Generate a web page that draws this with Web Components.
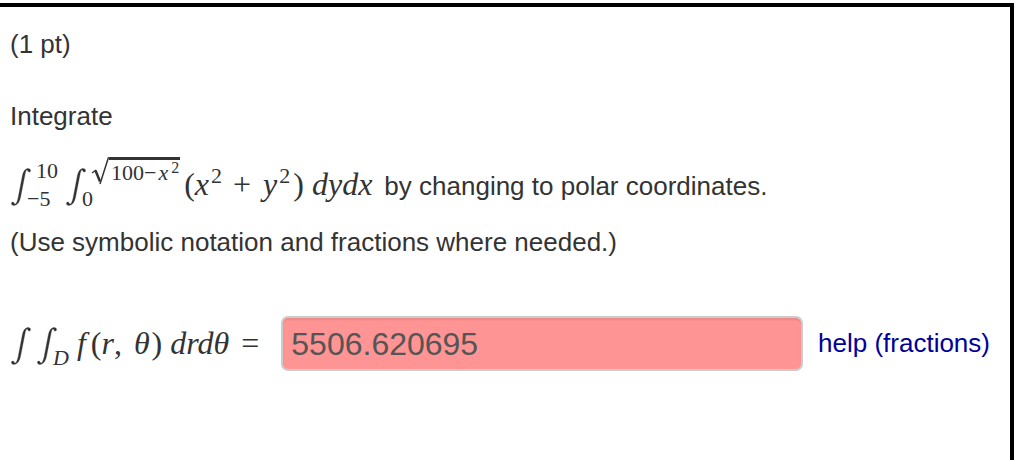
<!DOCTYPE html>
<html lang="en">
<head>
<meta charset="utf-8">
<title>Polar coordinates</title>
<style>
body { margin: 0; background: #fff; color: #333; font: 26px/36px "Liberation Sans", Arial, sans-serif; }
</style>
</head>
<body>
<problem-page></problem-page>
<script>
function define(name, html) {
  const t = document.createElement('template');
  t.innerHTML = html;
  customElements.define(name, class extends HTMLElement {
    constructor() {
      super();
      this.attachShadow({ mode: 'open' }).append(t.content.cloneNode(true));
    }
  });
}

define('math-text', `
<style>
:host { display: block; font: 32px/56px "Liberation Serif", "Times New Roman", serif; padding-bottom: 2px; white-space: nowrap; }
::slotted(sup) { font-size: 22px; line-height: 0; vertical-align: 12px; margin: 0 3px 0 2px; }
</style><slot></slot>`);

define('math-root', `
<style>
:host { display: flex; height: 28px; }
svg { width: 18px; height: 28px; fill: none; stroke: currentColor; }
span { border-top: 3px solid currentColor; line-height: 25px; padding: 0 1px 0 2px; white-space: nowrap; }
::slotted(sup) { font-size: 16px; line-height: 0; vertical-align: 7px; margin-left: 3px; }
::slotted(i) { margin-left: 2px; }
</style>
<svg viewBox="0 0 18 28" aria-hidden="true"><path d="M1 16L5 13" stroke-width="1.3"/><path d="M4.5 13.5L9 24.5" stroke-width="2.5"/><path d="M9 27L17.3 1H18" stroke-width="1.5"/></svg><span><slot></slot></span>`);

define('math-integral', `
<style>
:host { display: flex; align-items: center; font: 22px/28px "Liberation Serif", "Times New Roman", serif; }
svg { width: 20px; height: 38px; margin-top: 4px; fill: currentColor; stroke: currentColor; stroke-width: .3; flex: none; }
.limits { display: grid; grid-template-rows: 28px 28px; margin-left: -4px; white-space: nowrap; }
.upper { padding-left: 9px; }
</style>
<svg viewBox="0 0 20 38" aria-hidden="true"><path d="M7.2 29.5L11.400 7.500C12.600 2.600 14.800.6 17 .6c1.600 0 2.600.9 2.600 2 0 .9-.6 1.500-1.400 1.500-1.500 0-1.200-2-2.200-2-.9 0-1.400 1.500-2 4.500L9.700 28.500C8.400 35 5.800 37.400 2.800 37.400 1.300 37.400.4 36.600.4 35.600c0-.9.6-1.500 1.400-1.500 1.500 0 1.200 2 2.200 2 1.300 0 2.300-2.400 3.200-6.600z"/></svg>
<span class="limits"><span class="upper"><slot name="upper"></slot></span><span class="lower"><slot name="lower"></slot></span></span>`);

define('answer-field', `
<style>
:host { display: block; flex: 1; min-width: 0; }
input { display: block; box-sizing: border-box; width: 100%; height: 55px; margin: 0; padding: 2px 8px 0;
  border: 2px solid #ccc; border-radius: 7px; background: #ff9494; color: #555;
  box-shadow: inset 0 2px 2px rgba(0,0,0,.08); font: 32px "Liberation Sans", Arial, sans-serif; outline: 0; }
</style>
<input type="text" value="5506.620695" aria-label="Value of the integral">`);

define('help-link', `
<style>
:host { display: block; white-space: nowrap; padding-bottom: 2px; }
a { color: #009; text-decoration: none; }
</style><a href="#help"><slot></slot></a>`);

define('problem-page', `
<style>
:host { display: flow-root; }
main { box-sizing: border-box; min-height: calc(100vh - 3px); margin: 3px 2px 0 0; padding: 19px 20px 19px 10px;
  border: solid #000; border-width: 4px 4px 0 0; }
p { margin: 0; }
.integrate { margin-top: 36px; }
.row { display: flex; align-items: center; }
.statement { height: 60px; margin-top: 21px; }
.statement > span { margin-left: 12px; padding-top: 2px; }
.note { margin-top: 9px; }
.answer { height: 55px; margin-top: 56px; }
.first { margin-left: 1px; }
.second { margin-left: 8px; }
.answer .second { margin-left: 1px; }
.tight { margin-left: 4px; }
.gap { margin-left: 8px; }
.wide { margin-left: 12px; }
.f { margin-right: 5px; }
.theta { margin-right: 2px; }
answer-field { margin: 0 15px 0 22px; }
</style>
<main>
<p>(1 pt)</p>
<p class="integrate">Integrate</p>
<div class="row statement">
<math-integral class="first"><span slot="upper">10</span><span slot="lower">−5</span></math-integral>
<math-integral class="second"><math-root slot="upper">100−<i>x</i><sup>2</sup></math-root><span slot="lower">0</span></math-integral>
<math-text class="tight">(<i>x</i><sup>2</sup></math-text>
<math-text class="gap">+</math-text>
<math-text class="wide"><i>y</i><sup>2</sup>)</math-text>
<math-text class="gap"><i>dydx</i></math-text>
<span>by changing to polar coordinates.</span>
</div>
<p class="note">(Use symbolic notation and fractions where needed.)</p>
<div class="row answer">
<math-integral class="first"></math-integral>
<math-integral class="second"><i slot="lower">D</i></math-integral>
<math-text class="gap"><i class="f">f</i>(<i>r</i>,</math-text>
<math-text class="wide"><i class="theta">θ</i>)</math-text>
<math-text class="gap"><i>drdθ</i></math-text>
<math-text class="wide">=</math-text>
<answer-field></answer-field>
<help-link>help (fractions)</help-link>
</div>
</main>`);
</script>
</body>
</html>
